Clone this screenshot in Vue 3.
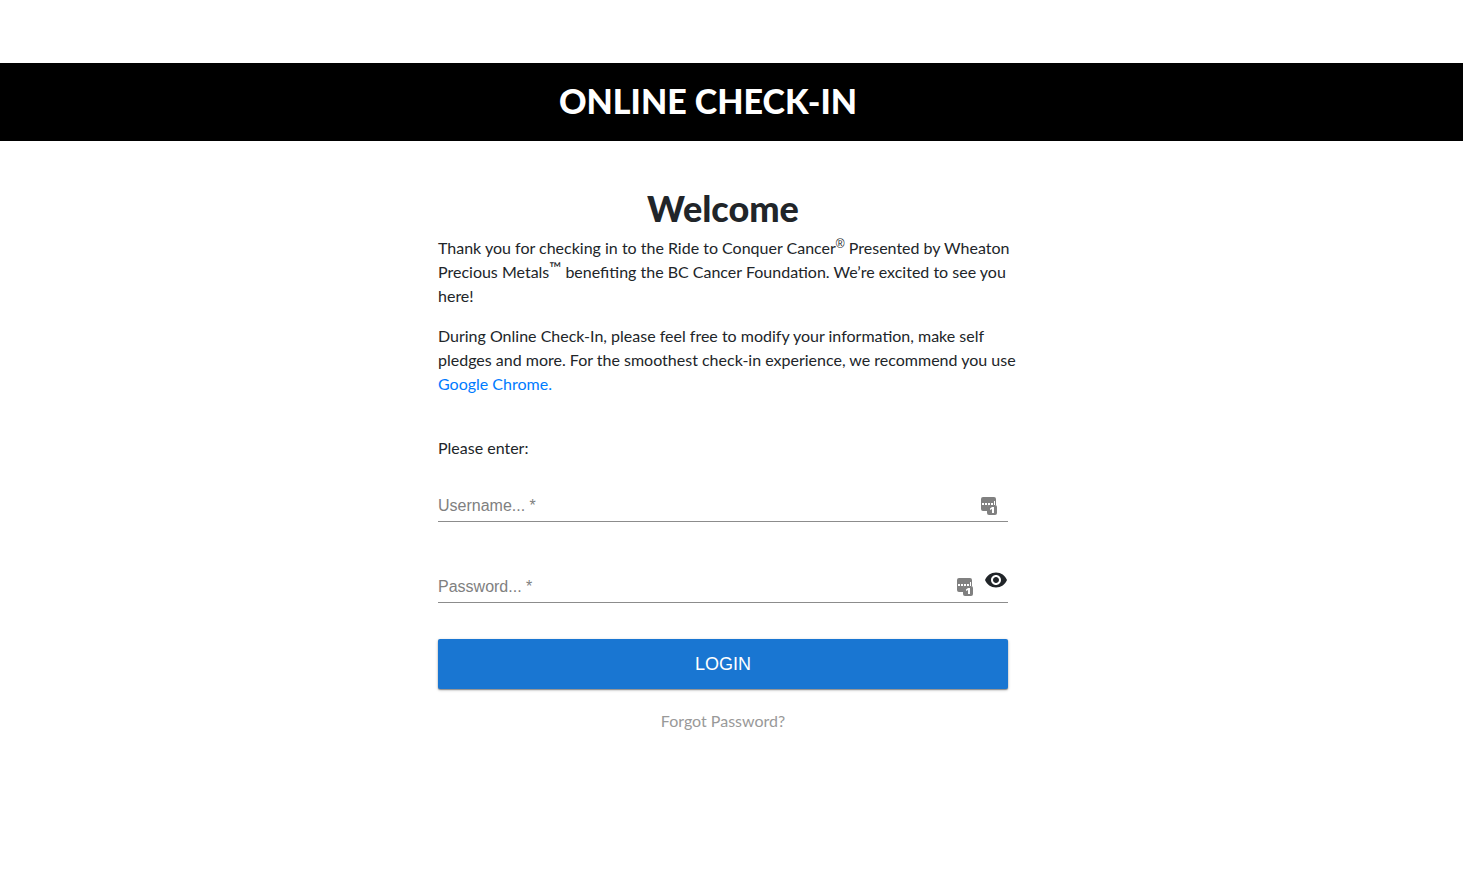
<script setup>
import { ref } from 'vue'

const username = ref('')
const password = ref('')
const showPassword = ref(false)
</script>

<template>
  <div class="page">
    <header class="banner">
      <h1>ONLINE CHECK-IN</h1>
    </header>

    <main class="content">
      <h2>Welcome</h2>
      <p>
        Thank you for checking in to the Ride to Conquer Cancer<sup class="reg">®</sup> Presented by Wheaton<br />
        Precious Metals<sup class="tm">™</sup> benefiting the BC Cancer Foundation. We’re excited to see you<br />
        here!
      </p>
      <p>
        During Online Check-In, please feel free to modify your information, make self<br />
        pledges and more. For the smoothest check-in experience, we recommend you use<br />
        <a href="#chrome">Google Chrome.</a>
      </p>

      <form @submit.prevent>
        <p class="prompt">Please enter:</p>

        <div class="field">
          <label v-show="!username" for="username">Username... *</label>
          <input id="username" v-model="username" type="text" required />
          <svg class="manager" viewBox="0 0 16 18" aria-hidden="true">
            <path fill="#808080" d="M2 0h11a2 2 0 0 1 2 2v6h-6.500a2 2 0 0 0-2 2v4H2a2 2 0 0 1-2-2V2a2 2 0 0 1 2-2z" />
            <rect x="6" y="8" width="10" height="10" rx="2" fill="#808080" />
            <path fill="#fff" d="M1 6h2v2H1zM4 6h2v2H4zM7 6h2v2H7zM10 6h2v2h-2zM13 4h1v4h-1z" />
            <path fill="#fff" d="M9 11.500l2-1.500h2v6h-2v-4l-2 1z" />
          </svg>
        </div>

        <div class="field">
          <label v-show="!password" for="password">Password... *</label>
          <input id="password" v-model="password" :type="showPassword ? 'text' : 'password'" required />
          <svg class="manager with-toggle" viewBox="0 0 16 18" aria-hidden="true">
            <path fill="#808080" d="M2 0h11a2 2 0 0 1 2 2v6h-6.500a2 2 0 0 0-2 2v4H2a2 2 0 0 1-2-2V2a2 2 0 0 1 2-2z" />
            <rect x="6" y="8" width="10" height="10" rx="2" fill="#808080" />
            <path fill="#fff" d="M1 6h2v2H1zM4 6h2v2H4zM7 6h2v2H7zM10 6h2v2h-2zM13 4h1v4h-1z" />
            <path fill="#fff" d="M9 11.500l2-1.500h2v6h-2v-4l-2 1z" />
          </svg>
          <button class="toggle" type="button" aria-label="Show password" @click="showPassword = !showPassword">
            <svg viewBox="0 0 24 24" aria-hidden="true">
              <path fill="#212529" d="M12 4.500C7 4.500 2.730 7.610 1 12c1.730 4.390 6 7.500 11 7.500s9.270-3.110 11-7.500c-1.730-4.390-6-7.500-11-7.500zM12 17c-2.760 0-5-2.240-5-5s2.240-5 5-5 5 2.240 5 5-2.240 5-5 5zm0-8c-1.660 0-3 1.340-3 3s1.340 3 3 3 3-1.340 3-3-1.340-3-3-3z" />
            </svg>
          </button>
        </div>

        <button class="login" type="submit">LOGIN</button>
      </form>

      <a class="forgot" href="#forgot">Forgot Password?</a>
    </main>
  </div>
</template>

<style>
body {
  margin: 0;
  background: #fff;
}
</style>

<style scoped>
.page {
  padding-top: 63px;
  color: #212529;
  font-family: Lato, sans-serif;
  font-size: 16px;
  line-height: 24px;
}
.banner {
  padding: 17px 47px 19px 0;
  background: #000;
  color: #fff;
  text-align: center;
}
h1,
h2 {
  margin: 0;
  font-weight: 900;
  line-height: 42px;
}
h1 {
  font-size: 34px;
}
h2 {
  margin-bottom: 7px;
  font-size: 36px;
  text-align: center;
}
.content {
  max-width: 570px;
  margin: 0 auto;
  padding: 46px 17px 32px 0;
}
p {
  margin: 0 0 16px;
  white-space: nowrap;
}
sup {
  line-height: 0;
}
.reg {
  font-family: "Liberation Sans", Arial, sans-serif;
  font-size: 12px;
}
.tm {
  font-size: 16px;
  vertical-align: 4px;
}
a {
  color: #007bff;
  text-decoration: none;
}
.prompt {
  margin: 40px 0 24px;
}
.field {
  position: relative;
  display: grid;
  height: 37px;
  margin-bottom: 43px;
  border-bottom: 1px solid #8c8c8c;
  font-family: "Liberation Sans", Arial, sans-serif;
}
.field:last-of-type {
  margin-bottom: 36px;
}
.field label,
.field input {
  grid-area: 1 / 1;
}
.field label {
  align-self: end;
  padding-bottom: 3px;
  color: #808080;
  pointer-events: none;
}
.field input {
  min-width: 0;
  padding: 8px 56px 0 0;
  border: 0;
  outline: 0;
  background: transparent;
  color: #212529;
  font: inherit;
}
.manager {
  position: absolute;
  right: 11px;
  bottom: 6px;
  width: 16px;
  height: 18px;
}
.manager.with-toggle {
  right: 35px;
}
.toggle {
  position: absolute;
  right: 0;
  bottom: 10px;
  width: 24px;
  height: 24px;
  padding: 0;
  border: 0;
  background: none;
  cursor: pointer;
}
.toggle svg {
  display: block;
  width: 24px;
  height: 24px;
}
.login {
  display: block;
  width: 100%;
  height: 50px;
  border: 0;
  border-radius: 2px;
  background: #1976d2;
  box-shadow: 0 1px 3px rgba(0, 0, 0, 0.3), 0 1px 1px rgba(0, 0, 0, 0.3);
  color: #fff;
  font-family: "Liberation Sans", Arial, sans-serif;
  font-size: 18px;
  cursor: pointer;
}
.forgot {
  display: block;
  margin-top: 20px;
  color: #999;
  text-align: center;
}
@media (max-width: 640px) {
  .content {
    padding-right: 16px;
    padding-left: 16px;
  }
  p {
    white-space: normal;
  }
  p br {
    display: none;
  }
}
</style>
